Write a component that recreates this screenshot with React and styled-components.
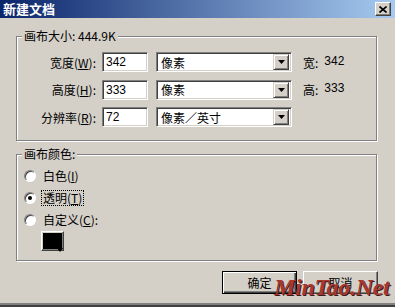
import React from 'react';
import styled, { createGlobalStyle } from 'styled-components';

const GlobalStyle = createGlobalStyle`
  html, body {
    margin: 0;
    padding: 0;
    background: #d4d0c8;
  }
  body {
    font-family: "Liberation Sans", "Noto Sans CJK SC", sans-serif;
    font-size: 12px;
    color: #000;
  }
`;

// window frame
const Window = styled.div`
  position: relative;
  width: 395px;
  height: 307px;
  box-sizing: border-box;
  background: #d4d0c8;
  border-bottom: 2px solid #404040;
  box-shadow: inset 0 -2px 0 #808080;
  display: flex;
  flex-direction: column;
  overflow: hidden;
`;

const TitleBar = styled.div`
  flex: none;
  height: 18px;
  display: flex;
  align-items: center;
  justify-content: space-between;
  padding: 0 4px 0 3px;
  background: linear-gradient(to right, #0a246a, #a6caf0);
`;

const Title = styled.span`
  color: #fff;
  font-weight: bold;
  font-size: 13px;
  line-height: 18px;
  font-family: "Noto Sans CJK SC", sans-serif;
`;

const CloseButton = styled.div`
  width: 16px;
  height: 14px;
  box-sizing: border-box;
  background: #d4d0c8;
  border: 1px solid;
  border-color: #fff #404040 #404040 #fff;
  box-shadow: inset -1px -1px 0 #808080;
  display: flex;
  align-items: center;
  justify-content: center;
`;

const Body = styled.div`
  flex: 1;
  display: flex;
  flex-direction: column;
  padding: 0 18px 0 16px;
`;

const GroupBox = styled.fieldset`
  margin: ${p => p.$top}px 0 0;
  padding: ${p => p.$pad};
  min-width: 0;
  border: 1px solid #808080;
  box-shadow: inset 1px 1px 0 #fff, 1px 1px 0 #fff;
`;

const Caption = styled.legend`
  margin-left: 5px;
  padding: 0 2px;
  line-height: 14px;
  background: #d4d0c8;
  font-family: "Noto Sans CJK SC", sans-serif;
`;

// size rows
const SizeGrid = styled.div`
  display: grid;
  grid-template-columns: 79px 46px 136px auto;
  grid-auto-rows: 20px;
  row-gap: 7.5px;
  column-gap: 6px;
  align-items: center;
`;

const Label = styled.label`
  text-align: right;
  font-family: "Noto Sans CJK SC", sans-serif;
  white-space: nowrap;
`;

const Sunken = styled.div`
  box-sizing: border-box;
  height: 20px;
  background: #fff;
  border: 1px solid;
  border-color: #808080 #fff #fff #808080;
  box-shadow: inset 1px 1px 0 #404040, inset -1px -1px 0 #d4d0c8;
  display: flex;
  align-items: center;
`;

const NumberField = styled(Sunken)`
  width: 46px;
  padding-left: 3px;
`;

const Select = styled(Sunken)`
  width: 136px;
  margin-left: 2px;
  padding: 2px 2px 2px 4px;
  justify-content: space-between;
  font-family: "Noto Sans CJK SC", sans-serif;
`;

const ArrowButton = styled.div`
  width: 16px;
  height: 16px;
  box-sizing: border-box;
  background: #d4d0c8;
  border: 1px solid;
  border-color: #d4d0c8 #404040 #404040 #d4d0c8;
  box-shadow: inset 1px 1px 0 #fff, inset -1px -1px 0 #808080;
  display: flex;
  align-items: center;
  justify-content: center;
`;

const Info = styled.div`
  margin-left: 7px;
  display: flex;
  gap: 6px;
  white-space: nowrap;
  span:first-child {
    font-family: "Noto Sans CJK SC", sans-serif;
  }
`;

// colour radios
const RadioList = styled.div`
  display: flex;
  flex-direction: column;
  padding-left: 7px;
`;

const RadioRow = styled.div`
  height: 22px;
  display: flex;
  align-items: center;
  gap: 5px;
  font-family: "Noto Sans CJK SC", sans-serif;
`;

const RadioCircle = styled.span`
  flex: none;
  width: 12px;
  height: 12px;
  box-sizing: border-box;
  border-radius: 50%;
  background: #fff;
  border: 1px solid;
  border-color: #808080 #fff #fff #808080;
  box-shadow: inset 1px 1px 0 #404040;
  display: flex;
  align-items: center;
  justify-content: center;

  &::after {
    content: '';
    width: 4px;
    height: 4px;
    border-radius: 50%;
    background: ${p => (p.$checked ? '#000' : 'transparent')};
  }
`;

const RadioText = styled.span`
  padding: 0 1px;
  line-height: 14px;
  border: 1px dotted ${p => (p.$focus ? '#000' : 'transparent')};
`;

const Swatch = styled.div`
  position: relative;
  width: 23px;
  height: 20px;
  margin-left: 17px;
  box-sizing: border-box;
  background: #000;
  border: 1px solid;
  border-color: #fff #404040 #404040 #fff;
  box-shadow: inset -1px -1px 0 #808080, inset 1px 1px 0 #d4d0c8;
`;

const SwatchArrow = styled.svg`
  position: absolute;
  right: 0;
  bottom: -2px;
`;

const ButtonRow = styled.div`
  margin-top: 10px;
  display: flex;
  justify-content: flex-end;
  gap: 6px;
  margin-right: -1px;
`;

const Button = styled.div`
  width: 75px;
  height: 23px;
  box-sizing: border-box;
  display: flex;
  align-items: center;
  justify-content: center;
  font-family: "Noto Sans CJK SC", sans-serif;
  background: #d4d0c8;
  border: 1px solid;
  border-color: ${p => (p.$default ? '#000' : '#fff #404040 #404040 #fff')};
  box-shadow: ${p =>
    p.$default
      ? 'inset 1px 1px 0 #fff, inset -1px -1px 0 #404040, inset -2px -2px 0 #808080'
      : 'inset -1px -1px 0 #808080'};
`;

const Watermark = styled.div`
  position: absolute;
  left: 274px;
  top: 274px;
  font-family: "Liberation Serif", serif;
  font-style: italic;
  font-weight: bold;
  font-size: 24px;
  color: #a8382f;
  text-shadow: 1px 1px 0 #3a1a18;
  letter-spacing: -0.3px;
  pointer-events: none;
`;

const sizeRows = [
  { label: '宽度', key: 'W', value: '342', unit: '像素', info: ['宽:', '342'] },
  { label: '高度', key: 'H', value: '333', unit: '像素', info: ['高:', '333'] },
  { label: '分辨率', key: 'R', value: '72', unit: '像素／英寸', info: null },
];

const radios = [
  { label: '白色', key: 'I', tail: ')' },
  { label: '透明', key: 'T', tail: ')', checked: true },
  { label: '自定义', key: 'C', tail: '):' },
];

const Triangle = () => (
  <svg width="7" height="4" viewBox="0 0 7 4">
    <path d="M0 0h7L3.5 4z" fill="#000" />
  </svg>
);

export default function App() {
  return (
    <>
      <GlobalStyle />
      <Window>
        <TitleBar>
          <Title>新建文档</Title>
          <CloseButton>
            <svg width="8" height="7" viewBox="0 0 8 7">
              <path d="M0.5 0.5L7.5 6.5M7.5 0.5L0.5 6.5" stroke="#000" strokeWidth="1.6" />
            </svg>
          </CloseButton>
        </TitleBar>
        <Body>
          <GroupBox $top={11} $pad="9px 0 13px 0">
            <Caption>画布大小: 444.9K</Caption>
            <SizeGrid>
              {sizeRows.map(r => (
                <React.Fragment key={r.key}>
                  <Label>
                    {r.label}(<u>{r.key}</u>):
                  </Label>
                  <NumberField>{r.value}</NumberField>
                  <Select>
                    <span>{r.unit}</span>
                    <ArrowButton>
                      <Triangle />
                    </ArrowButton>
                  </Select>
                  {r.info ? (
                    <Info>
                      <span>{r.info[0]}</span>
                      <span>{r.info[1]}</span>
                    </Info>
                  ) : (
                    <span />
                  )}
                </React.Fragment>
              ))}
            </SizeGrid>
          </GroupBox>

          <GroupBox $top={6} $pad="4px 0 9px 0">
            <Caption>画布颜色:</Caption>
            <RadioList>
              {radios.map(r => (
                <RadioRow key={r.key}>
                  <RadioCircle $checked={r.checked} />
                  <RadioText $focus={r.checked}>
                    {r.label}(<u>{r.key}</u>{r.tail}
                  </RadioText>
                </RadioRow>
              ))}
              <Swatch>
                <SwatchArrow width="6" height="4" viewBox="0 0 6 4">
                  <path d="M0 0h6L3 4z" fill="#000" />
                </SwatchArrow>
              </Swatch>
            </RadioList>
          </GroupBox>

          <ButtonRow>
            <Button $default>确定</Button>
            <Button>取消</Button>
          </ButtonRow>
        </Body>
        <Watermark>MinTao.Net</Watermark>
      </Window>
    </>
  );
}
